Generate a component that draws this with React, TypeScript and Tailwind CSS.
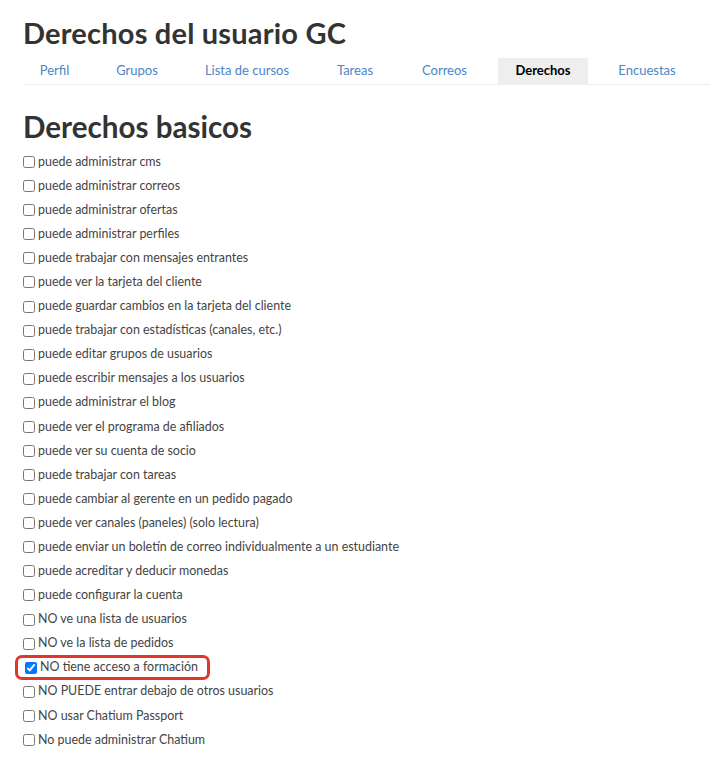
import { useState } from 'react';

const tabs = [
  { label: 'Perfil', w: 'w-[63px]' },
  { label: 'Grupos', w: 'w-[76px]' },
  { label: 'Lista de cursos', w: 'w-[118px]' },
  { label: 'Tareas', w: 'w-[72px]' },
  { label: 'Correos', w: 'w-[81px]' },
  { label: 'Derechos', w: 'w-[90px]' },
  { label: 'Encuestas', w: 'w-[92px]' },
];

const rights = [
  'puede administrar cms',
  'puede administrar correos',
  'puede administrar ofertas',
  'puede administrar perfiles',
  'puede trabajar con mensajes entrantes',
  'puede ver la tarjeta del cliente',
  'puede guardar cambios en la tarjeta del cliente',
  'puede trabajar con estadísticas (canales, etc.)',
  'puede editar grupos de usuarios',
  'puede escribir mensajes a los usuarios',
  'puede administrar el blog',
  'puede ver el programa de afiliados',
  'puede ver su cuenta de socio',
  'puede trabajar con tareas',
  'puede cambiar al gerente en un pedido pagado',
  'puede ver canales (paneles) (solo lectura)',
  'puede enviar un boletín de correo individualmente a un estudiante',
  'puede acreditar y deducir monedas',
  'puede configurar la cuenta',
  'NO ve una lista de usuarios',
  'NO ve la lista de pedidos',
  'NO tiene acceso a formación',
  'NO PUEDE entrar debajo de otros usuarios',
  'NO usar Chatium Passport',
  'No puede administrar Chatium',
];

export default function App() {
  const [active] = useState('Derechos');
  const [checked, setChecked] = useState<Record<string, boolean>>({
    'NO tiene acceso a formación': true,
  });

  return (
    <div className="min-h-screen bg-white pl-[23px] pt-[15px] text-[#333] font-['Lato',sans-serif]">
      <h1 className="text-[29px] font-bold leading-[35px] tracking-[0.2px]">Derechos del usuario GC</h1>

      <div className="mt-[8px] flex gap-[13px] border-b border-[#eee]">
        {tabs.map((t) => (
          <div
            key={t.label}
            className={`${t.w} h-[26px] flex items-center justify-center text-[13px] ${
              t.label === active ? 'bg-[#eee] text-black font-bold' : 'text-[#4a86c8]'
            }`}
          >
            {t.label}
          </div>
        ))}
      </div>

      <h2 className="mt-[24px] text-[29.6px] font-bold leading-[36px]">Derechos basicos</h2>

      <div className="mt-[5px] flex flex-col">
        {rights.map((r) => {
          const isOn = !!checked[r];
          return (
            <div key={r} className="h-[24.08px] flex items-center">
              <label
                className={`flex items-center gap-[3px] text-[12.45px] text-[#444] ${
                  isOn ? 'relative -ml-[8px] pl-[7px] pr-[9px] h-[25px] rounded-[7px] border-[3px] border-[#e0372d]' : ''
                }`}
              >
                <input
                  type="checkbox"
                  checked={isOn}
                  onChange={() => setChecked({ ...checked, [r]: !isOn })}
                  className="m-0 w-[12px] h-[12px]"
                />
                {r}
              </label>
            </div>
          );
        })}
      </div>
    </div>
  );
}
